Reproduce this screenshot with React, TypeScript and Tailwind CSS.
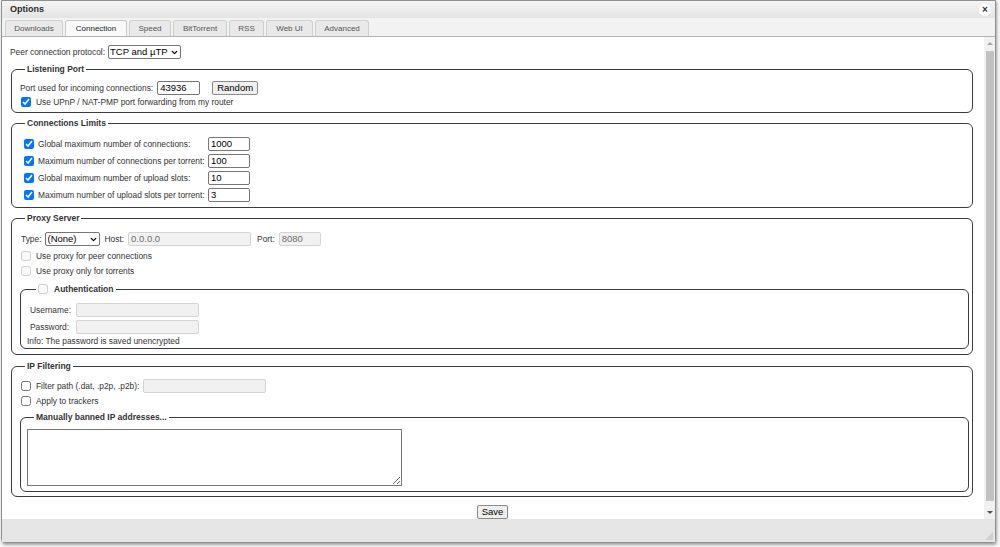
import { ChevronDown } from 'lucide-react'
import type { ReactNode } from 'react'

const font = { fontFamily: '"Liberation Sans", Arial, sans-serif' }

const tabs = [
  { name: 'Downloads', w: 'w-[58px]' },
  { name: 'Connection', w: 'w-[62px]' },
  { name: 'Speed', w: 'w-[42px]' },
  { name: 'BitTorrent', w: 'w-[54px]' },
  { name: 'RSS', w: 'w-[35px]' },
  { name: 'Web UI', w: 'w-[47px]' },
  { name: 'Advanced', w: 'w-[54px]' },
]

const limits = [
  { label: 'Global maximum number of connections:', value: '1000' },
  { label: 'Maximum number of connections per torrent:', value: '100' },
  { label: 'Global maximum number of upload slots:', value: '10' },
  { label: 'Maximum number of upload slots per torrent:', value: '3' },
]

function Fieldset({
  legend,
  className,
  legendClass,
  children,
}: {
  legend: ReactNode
  className?: string
  legendClass?: string
  children: ReactNode
}) {
  return (
    <fieldset className={`rounded-[6px] border border-[#3c3c3c] ${className ?? ''}`}>
      <legend
        className={`flex h-[12px] items-center gap-[6px] px-[2px] text-[8.5px] font-bold leading-[12px] text-[#333] ${legendClass ?? 'ml-[5px]'}`}
      >
        {legend}
      </legend>
      {children}
    </fieldset>
  )
}

function Check({ checked, disabled }: { checked?: boolean; disabled?: boolean }) {
  return (
    <input
      type="checkbox"
      defaultChecked={checked}
      disabled={disabled}
      className="m-0 h-[10px] w-[10px] shrink-0"
    />
  )
}

function TextBox({ value, w, disabled }: { value?: string; w: string; disabled?: boolean }) {
  return (
    <input
      type="text"
      defaultValue={value}
      disabled={disabled}
      className={`h-[14px] ${w} rounded-[2px] border px-[2px] text-[9.5px] leading-[12px] ${
        disabled ? 'border-[#d4d4d4] bg-[#f1f1f1] text-[#6d6d6d]' : 'border-[#767676] bg-white text-black'
      }`}
    />
  )
}

function Select({ value, w, size }: { value: string; w: string; size: string }) {
  return (
    <div className={`relative h-[14px] ${w}`}>
      <select
        defaultValue={value}
        className={`h-full w-full appearance-none rounded-[2px] border border-[#767676] bg-white pl-[1px] ${size} leading-[12px] text-black`}
      >
        <option>{value}</option>
      </select>
      <ChevronDown
        size={9}
        strokeWidth={3.5}
        className="pointer-events-none absolute right-[2px] top-[2.5px] text-black"
      />
    </div>
  )
}

export default function App() {
  return (
    <div className="h-[547px] w-[1000px] overflow-hidden whitespace-nowrap bg-[#f7f7f7] text-[8.4px] text-[#333]" style={font}>
      <div className="ml-[1px] flex h-[543px] w-[995px] flex-col rounded-b-[4px] border border-[#8f8f8f] bg-[#f3f3f3] shadow-[1px_2px_3px_rgba(0,0,0,0.35)]">
        {/* title bar */}
        <div className="flex h-[17px] items-center justify-between bg-gradient-to-b from-[#f4f4f4] to-[#e4e4e4] pl-[8px] pr-[4px]">
          <span className="text-[9px] font-bold text-[#2a2a2a]">Options</span>
          <span className="flex h-[12px] w-[12px] items-center justify-center rounded-full bg-white text-[10px] font-bold leading-none text-[#333]">
            ×
          </span>
        </div>

        {/* tabs */}
        <div className="flex h-[19px] items-end gap-[2px] border-b border-[#b3b3b3] bg-[#f2f2f2] pl-[3px]">
          {tabs.map((t) => (
            <div
              key={t.name}
              className={`flex h-[16px] ${t.w} items-center justify-center rounded-t-[3px] border border-b-0 text-[8px] ${
                t.name === 'Connection'
                  ? 'border-[#c8c8c8] bg-[#f9f9f9] text-[#222]'
                  : 'border-[#cfcfcf] bg-[#e9e9e9] text-[#555]'
              }`}
            >
              {t.name}
            </div>
          ))}
        </div>

        {/* content */}
        <div className="flex h-[482px] bg-white">
          <div className="flex-1 pl-[8px] pr-[10px] pt-[8px]">
            <div className="flex h-[14px] items-center gap-[3px]">
              <span>Peer connection protocol:</span>
              <Select value="TCP and µTP" w="w-[73px]" size="text-[9.5px]" />
            </div>

            <Fieldset legend="Listening Port" className="mx-[1px] mt-[4px] pb-[4px] pl-[8px]">
              <div className="mt-[6px] flex h-[14px] items-center">
                <span>Port used for incoming connections:</span>
                <span className="ml-[4px]">
                  <TextBox value="43936" w="w-[43px]" />
                </span>
                <button className="ml-[12px] h-[14px] w-[46px] rounded-[2px] border border-[#8a8a8a] bg-[#efefef] text-[9.5px] leading-[12px] text-black">
                  Random
                </button>
              </div>
              <div className="mt-[1px] flex h-[12px] items-center gap-[5px] pl-[1px]">
                <Check checked />
                <span>Use UPnP / NAT-PMP port forwarding from my router</span>
              </div>
            </Fieldset>

            <Fieldset legend="Connections Limits" className="mx-[1px] mt-[4px] pb-[5px] pl-[8px]">
              <div className="mt-[8px] flex flex-col gap-[3px]">
                {limits.map((l) => (
                  <div key={l.label} className="flex h-[14px] items-center pl-[4px]">
                    <Check checked />
                    <span className="ml-[4px] w-[166px] shrink-0">{l.label}</span>
                    <span className="ml-[4px]">
                      <TextBox value={l.value} w="w-[42px]" />
                    </span>
                  </div>
                ))}
              </div>
            </Fieldset>

            <Fieldset legend="Proxy Server" className="mx-[1px] mt-[4px] pb-[5px] pl-[8px] pr-[3px]">
              <div className="mt-[8px] flex h-[14px] items-center pl-[1px]">
                <span>Type:</span>
                <span className="ml-[4px]">
                  <Select value="(None)" w="w-[55px]" size="text-[9.5px]" />
                </span>
                <span className="ml-[4px]">Host:</span>
                <span className="ml-[4px]">
                  <TextBox value="0.0.0.0" w="w-[123px]" disabled />
                </span>
                <span className="ml-[6px]">Port:</span>
                <span className="ml-[4px]">
                  <TextBox value="8080" w="w-[42px]" disabled />
                </span>
              </div>
              <div className="mt-[4px] flex h-[12px] items-center gap-[5px] pl-[1px]">
                <Check disabled />
                <span>Use proxy for peer connections</span>
              </div>
              <div className="mt-[3px] flex h-[12px] items-center gap-[5px] pl-[1px]">
                <Check disabled />
                <span>Use proxy only for torrents</span>
              </div>

              <Fieldset
                legend={
                  <>
                    <Check disabled />
                    <span>Authentication</span>
                  </>
                }
                legendClass="ml-[9px]"
                className="mt-[6px] pb-[2px] pl-[6px]"
              >
                <div className="mt-[8px] flex h-[14px] items-center">
                  <span className="w-[49px] pl-[3px]">Username:</span>
                  <TextBox w="w-[123px]" disabled />
                </div>
                <div className="mt-[3px] flex h-[14px] items-center">
                  <span className="w-[49px] pl-[3px]">Password:</span>
                  <TextBox w="w-[123px]" disabled />
                </div>
                <div className="mt-[2px] flex h-[10px] items-center">Info: The password is saved unencrypted</div>
              </Fieldset>
            </Fieldset>

            <Fieldset legend="IP Filtering" className="mx-[1px] mt-[5px] pb-[4px] pl-[8px] pr-[3px]">
              <div className="mt-[7px] flex h-[14px] items-center pl-[1px]">
                <Check />
                <span className="ml-[5px]">Filter path (.dat, .p2p, .p2b):</span>
                <span className="ml-[4px]">
                  <TextBox w="w-[123px]" disabled />
                </span>
              </div>
              <div className="mt-[2px] flex h-[12px] items-center gap-[5px] pl-[1px]">
                <Check />
                <span>Apply to trackers</span>
              </div>
              <Fieldset
                legend="Manually banned IP addresses..."
                legendClass="ml-[7px]"
                className="mt-[4px] pb-[5px] pl-[6px]"
              >
                <textarea className="mt-[6px] block h-[57px] w-[375px] resize border border-[#767676] bg-white" />
              </Fieldset>
            </Fieldset>

            <div className="mt-[8px] flex justify-center pl-[1px]">
              <button className="h-[14px] w-[31px] rounded-[2px] border border-[#8a8a8a] bg-[#efefef] text-[9.5px] leading-[12px] text-black">
                Save
              </button>
            </div>
          </div>

          {/* scrollbar */}
          <div className="flex w-[11px] flex-col items-center bg-[#f1f1f1]">
            <div className="mt-[5px] h-0 w-0 border-x-[3px] border-b-[3px] border-x-transparent border-b-[#a3a3a3]" />
            <div className="mt-[6px] w-[8px] flex-1 bg-[#c1c1c1]" />
            <div className="mb-[5px] mt-[10px] h-0 w-0 border-x-[3px] border-t-[3px] border-x-transparent border-t-[#505050]" />
          </div>
        </div>

        {/* footer */}
        <div className="flex flex-1 items-end justify-end bg-[#e6e6e6] pb-[2px] pr-[2px]">
          <div className="h-0 w-0 border-b-[8px] border-l-[8px] border-b-[#cfcfcf] border-l-transparent" />
        </div>
      </div>
    </div>
  )
}
